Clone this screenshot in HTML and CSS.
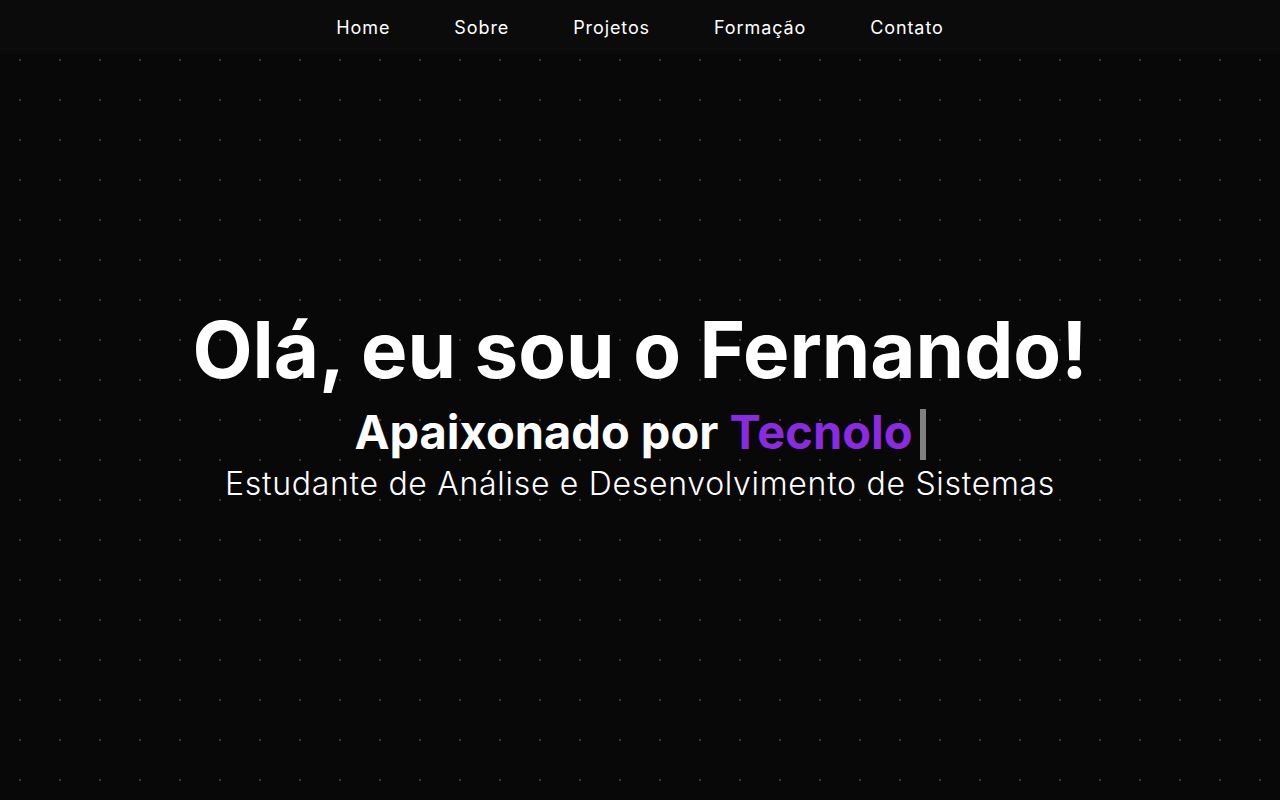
FILE: index.html
```html
<!DOCTYPE html>
<html lang="pt-BR">
<head>
<meta charset="utf-8">
<title>Fernando</title>
<link rel="stylesheet" href="styles.css">
</head>
<body>
<header class="nav">
  <a class="nav-link" href="#home">Home</a>
  <a class="nav-link" href="#sobre">Sobre</a>
  <a class="nav-link" href="#projetos">Projetos</a>
  <a class="nav-link" href="#formacao">Formação</a>
  <a class="nav-link" href="#contato">Contato</a>
</header>
<main class="hero">
  <h1 class="title">Olá, eu sou o Fernando!</h1>
  <h2 class="subtitle">Apaixonado por <span class="accent">Tecnolo</span><span class="cursor"></span></h2>
  <p class="lead">Estudante de Análise e Desenvolvimento de Sistemas</p>
</main>
</body>
</html>
```
FILE: styles.css
```css
* { box-sizing: border-box; margin: 0; padding: 0; }
html, body { height: 100%; }
body {
  background-color: #080808;
  background-image: radial-gradient(circle at center, #383838 0.8px, transparent 1px);
  background-size: 40px 40px;
  color: #fff;
  font-family: Inter, "Noto Sans", sans-serif;
  overflow: hidden;
}
.nav {
  height: 54px;
  background: #0b0b0b;
  display: flex;
  justify-content: center;
  align-items: center;
  gap: 64px;
}
.nav-link {
  color: #fff;
  text-decoration: none;
  font-size: 18px;
  font-weight: 400;
  letter-spacing: 0.9px;
}
.hero {
  height: 746px;
  display: flex;
  flex-direction: column;
  align-items: center;
  padding-top: 246px;
}
.title {
  font-size: 78px;
  font-weight: 700;
  line-height: 100px;
}
.subtitle {
  font-size: 47px;
  font-weight: 700;
  line-height: 56px;
  white-space: nowrap;
  margin-top: 4px;
}
.accent { color: #8a2be2; }
.cursor {
  display: inline-block;
  width: 6px;
  height: 51px;
  background: #808080;
  margin-left: 7px;
  vertical-align: -11px;
}
.lead {
  font-size: 32px;
  font-weight: 300;
  line-height: 42px;
  letter-spacing: 0.7px;
  margin-top: 3px;
}
```
